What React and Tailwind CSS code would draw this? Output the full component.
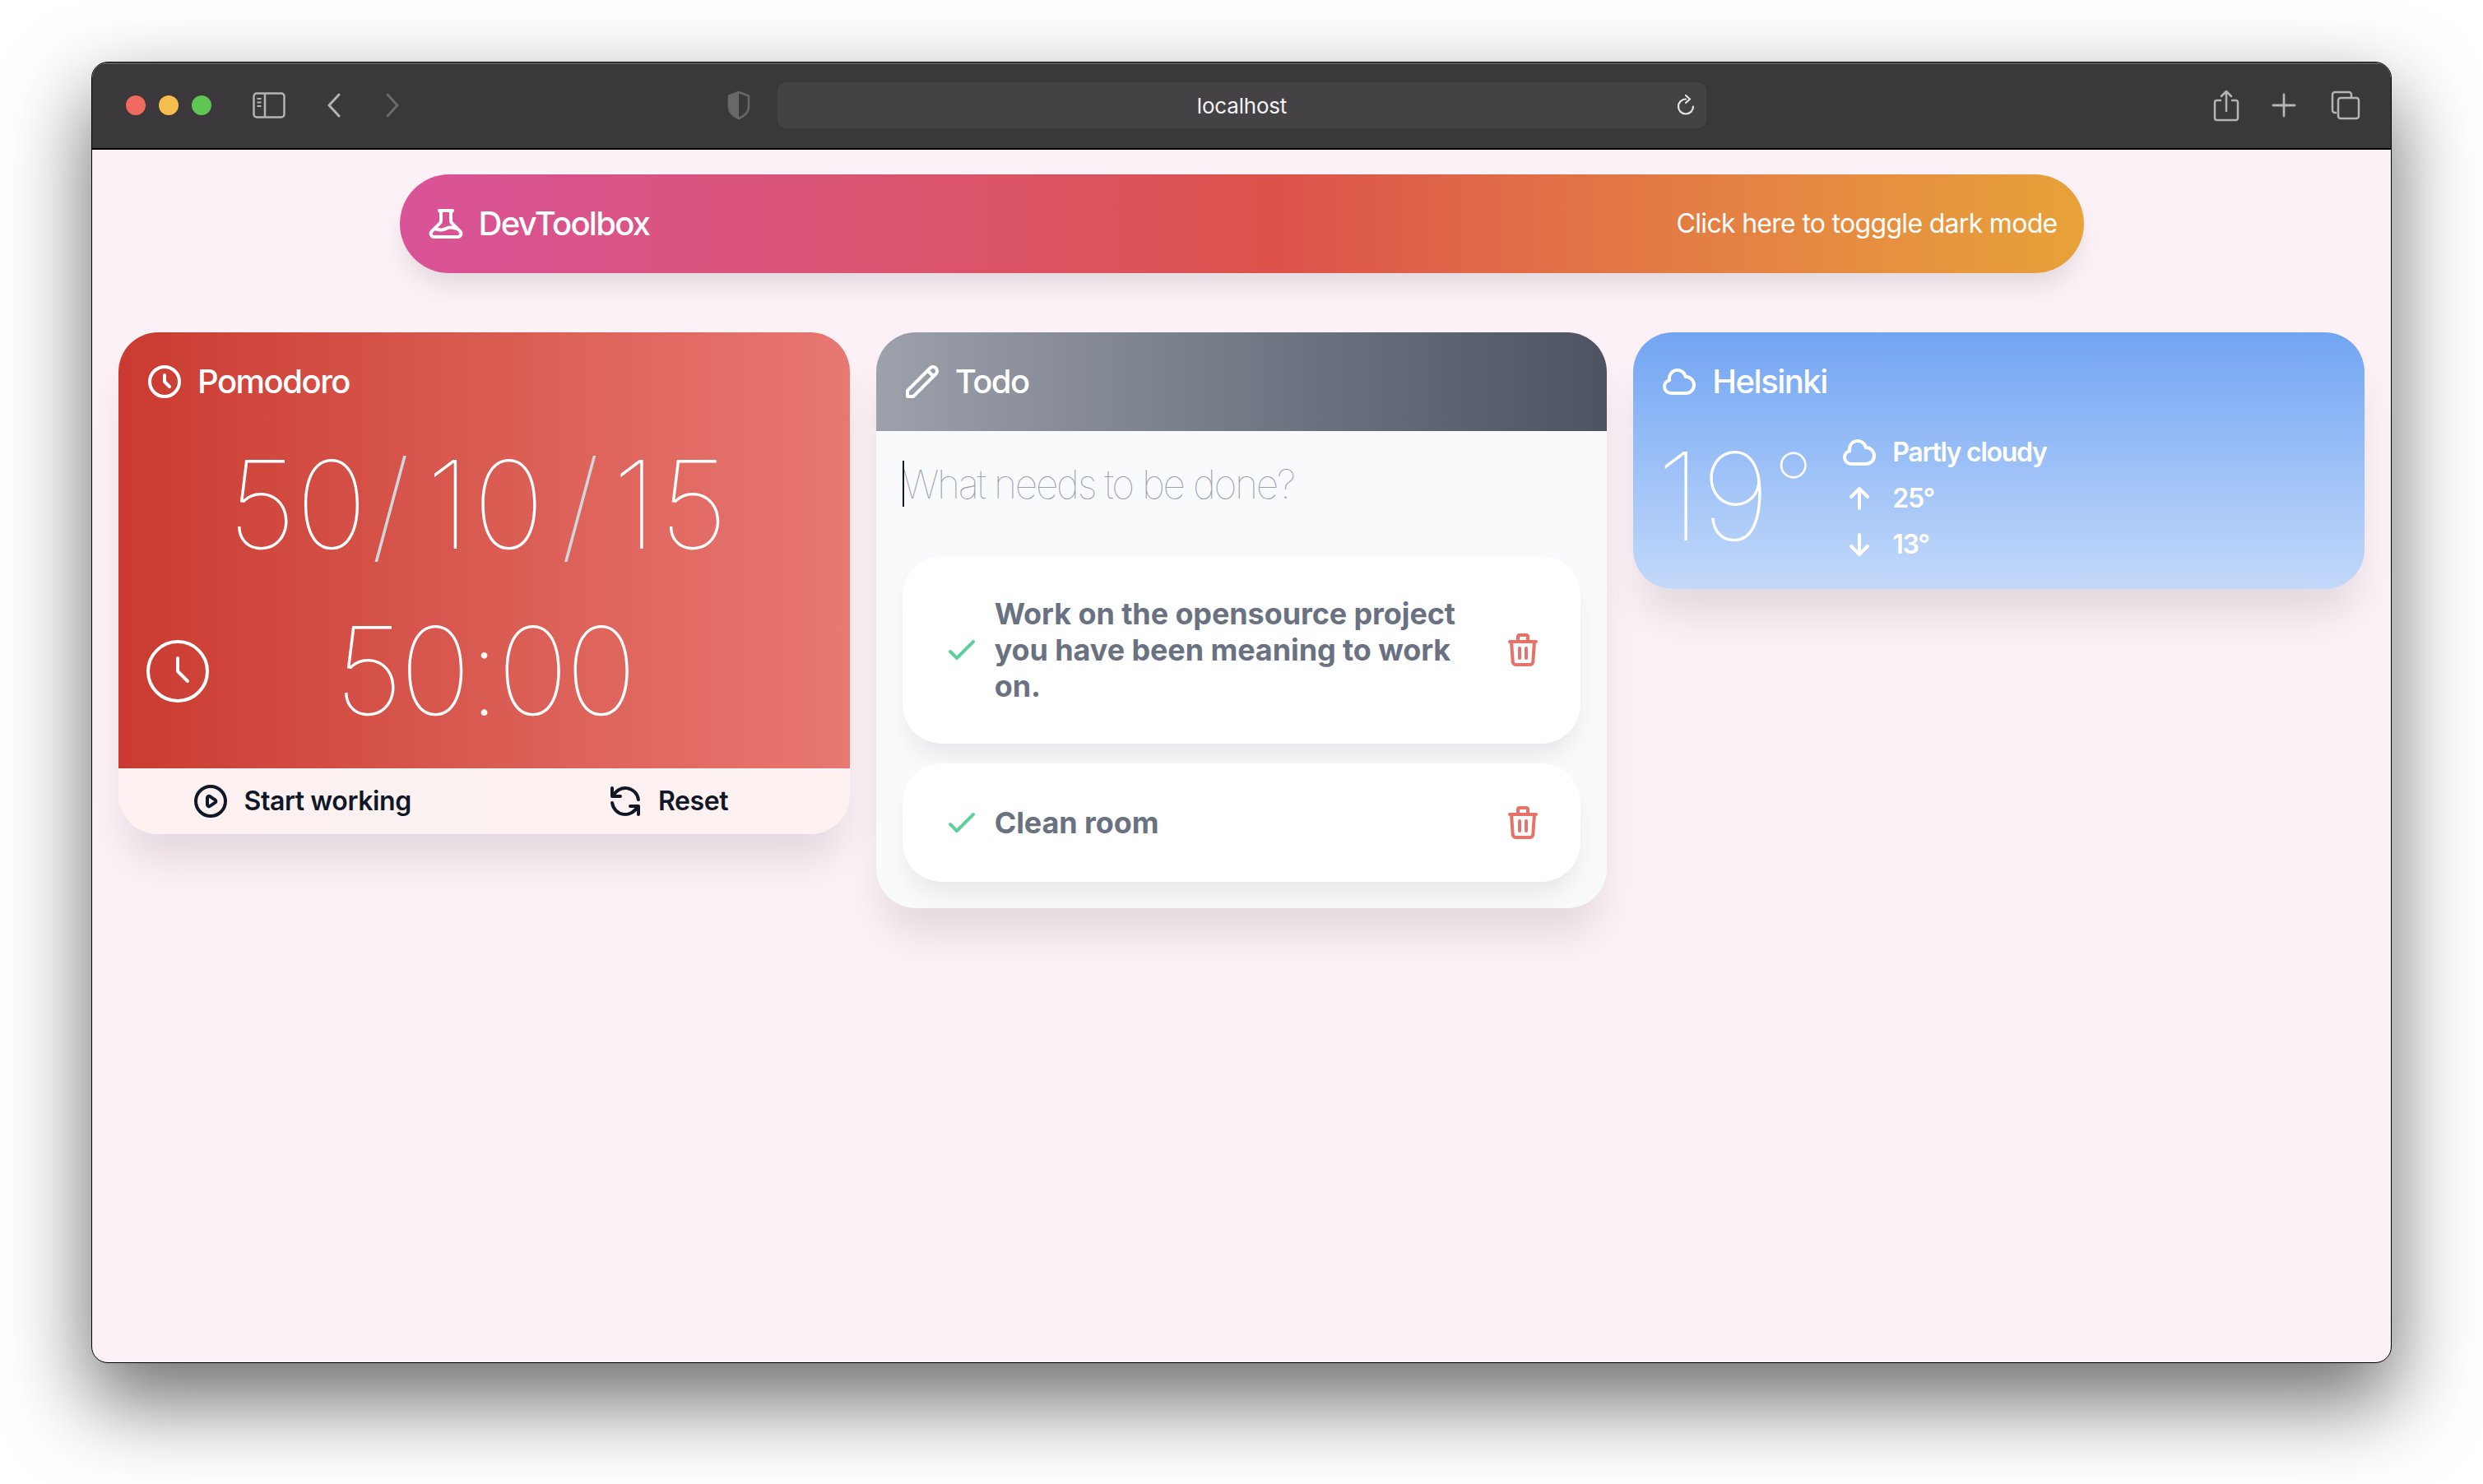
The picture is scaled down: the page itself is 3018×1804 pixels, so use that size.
import {
  HiOutlineBeaker,
  HiOutlineClock,
  HiOutlinePencil,
  HiOutlineCloud,
  HiOutlinePlay,
  HiOutlineRefresh,
  HiOutlineTrash,
  HiOutlineCheck,
  HiOutlineArrowSmUp,
  HiOutlineArrowSmDown,
} from 'react-icons/hi'

const todos = [
  { id: 1, title: 'Work on the opensource project you have been meaning to work on.' },
  { id: 2, title: 'Clean room' },
]

const weatherRows = [
  { icon: HiOutlineCloud, label: 'Partly cloudy' },
  { icon: HiOutlineArrowSmUp, label: '25°' },
  { icon: HiOutlineArrowSmDown, label: '13°' },
]

const ToolbarBar = () => (
  <div className="flex items-center h-[106px] bg-[#3a383b] border-b-2 border-black shadow-[inset_0_2px_0_#5c5a5d] shrink-0 text-[#b4b3b5]">
    <div className="flex gap-4 ml-[41px]">
      <span className="w-6 h-6 rounded-full bg-[#ee695e]" />
      <span className="w-6 h-6 rounded-full bg-[#f5be4f]" />
      <span className="w-6 h-6 rounded-full bg-[#60c553]" />
    </div>
    <svg className="ml-[50px]" width="40" height="32" viewBox="0 0 40 32" fill="none" stroke="currentColor" strokeWidth="2.5">
      <rect x="1.5" y="1.5" width="37" height="29" rx="3.5" />
      <path d="M15 1.5v29" />
      <path d="M5.5 8h5M5.5 12.500h5M5.500 17h5" strokeWidth="2" />
    </svg>
    <svg className="ml-[49px]" width="20" height="30" viewBox="0 0 20 30" fill="none" stroke="currentColor" strokeWidth="3" strokeLinecap="round" strokeLinejoin="round">
      <path d="M16 2 4 15l12 13" />
    </svg>
    <svg className="ml-[51px] text-[#6b6a6c]" width="20" height="30" viewBox="0 0 20 30" fill="none" stroke="currentColor" strokeWidth="3" strokeLinecap="round" strokeLinejoin="round">
      <path d="M4 2l12 13L4 28" />
    </svg>
    <svg className="ml-[396px] text-[#68676a]" width="30" height="36" viewBox="0 0 30 36" fill="none">
      <path d="M15 2 3 6.500V20c0 6 5 11 12 14 7-3 12-8 12-14V6.500Z" stroke="currentColor" strokeWidth="2.500" strokeLinejoin="round" />
      <path d="M15 2 3 6.500V20c0 6 5 11 12 14Z" fill="currentColor" />
    </svg>
    <div className="relative flex items-center justify-center ml-[32px] w-[1129px] h-14 rounded-[10px] bg-[#444245] text-[26px] tracking-[-0.2px] text-[#f2f2f2]">
      localhost
      <svg className="absolute right-[12px] top-[14px]" width="24" height="30" viewBox="0 0 24 30" fill="none" stroke="#e6e6e6" strokeWidth="2.200" strokeLinecap="round" strokeLinejoin="round">
        <path d="M11 6.500a9 9 0 1 0 9 9" />
        <path d="M11 2l5 4.500-5 4.500" />
      </svg>
    </div>
    <svg className="ml-[615px]" width="34" height="40" viewBox="0 0 34 40" fill="none" stroke="currentColor" strokeWidth="2.500" strokeLinecap="round" strokeLinejoin="round">
      <path d="M10 14H5.500A2.500 2.500 0 0 0 3 16.500v19A2.500 2.500 0 0 0 5.500 38h23a2.500 2.500 0 0 0 2.500-2.500v-19a2.500 2.500 0 0 0-2.500-2.500H24" />
      <path d="M17 27V3M11 9l6-6 6 6" />
    </svg>
    <svg className="ml-[38px]" width="30" height="30" viewBox="0 0 30 30" fill="none" stroke="currentColor" strokeWidth="2.800" strokeLinecap="round">
      <path d="M15 2v26M2 15h26" />
    </svg>
    <svg className="ml-[42px]" width="36" height="36" viewBox="0 0 36 36" fill="none" stroke="currentColor" strokeWidth="2.500" strokeLinejoin="round">
      <path d="M7 27H5a3 3 0 0 1-3-3V5a3 3 0 0 1 3-3h17a3 3 0 0 1 3 3v3" />
      <rect x="9" y="9" width="25" height="25" rx="3" />
    </svg>
  </div>
)

const CardTitle = ({ icon: Icon, title }) => (
  <div className="flex items-center gap-[16px] h-[120px] px-[32px] text-white text-[40px] font-medium tracking-[-1.5px] shrink-0">
    <Icon className="w-12 h-12" />
    <span>{title}</span>
  </div>
)

const Pomodoro = () => (
  <div className="rounded-[48px] overflow-hidden shadow-[0_40px_50px_-10px_rgba(0,0,0,0.1)]">
    <div className="h-[530px] bg-gradient-to-r from-[#ca3a30] to-[#e87872] text-white">
      <CardTitle icon={HiOutlineClock} title="Pomodoro" />
      <div className="flex justify-center text-[148px] font-thin tracking-[-1px] leading-[160px] mt-[10px] pr-[12px]">
        <span>50</span>
        <span className="ml-[5px] mr-[20px] text-gray-300">/</span>
        <span className="tracking-[3px]">10</span>
        <span className="ml-[16px] mr-[16px] text-gray-300">/</span>
        <span className="tracking-[3px]">15</span>
      </div>
      <div className="grid grid-cols-[1fr_auto_1fr] items-center mt-[42px] px-[24px]">
        <svg className="w-24 h-24" viewBox="0 0 24 24" fill="none" stroke="currentColor" strokeWidth="1" strokeLinecap="round" strokeLinejoin="round">
          <path d="M12 8v4l3 3m6-3a9 9 0 11-18 0 9 9 0 0118 0z" />
        </svg>
        <span className="text-[148px] font-thin tracking-[-4.5px] leading-[160px]">50:00</span>
        <span />
      </div>
    </div>
    <div className="grid grid-cols-2 h-[80px] text-gray-900 text-[32px] font-semibold tracking-[-0.4px]">
      <div className="flex items-center justify-center gap-[16px] bg-gradient-to-r from-[#fdf2f1] to-[#fbf1f0]">
        <HiOutlinePlay className="w-12 h-12" />
        <span>Start working</span>
      </div>
      <div className="flex items-center justify-center gap-[16px] bg-[#fdf2f1]">
        <HiOutlineRefresh className="w-12 h-12" />
        <span>Reset</span>
      </div>
    </div>
  </div>
)

const TodoItem = ({ title }) => (
  <div className="flex items-center gap-[16px] pl-[48px] pr-[46px] py-[48px] rounded-[48px] bg-white shadow-[0_20px_30px_-6px_rgba(0,0,0,0.08)]">
    <HiOutlineCheck className="w-12 h-12 text-[#5fd09c] shrink-0" />
    <p className="flex-1 text-[36px] leading-[44px] font-bold tracking-[-0.1px] text-gray-500">{title}</p>
    <HiOutlineTrash className="w-12 h-12 text-[#e57369] shrink-0" />
  </div>
)

const Todo = () => (
  <div className="rounded-[48px] overflow-hidden bg-[#f9fafb] shadow-[0_40px_50px_-10px_rgba(0,0,0,0.1)]">
    <div className="bg-gradient-to-r from-[#9ca1ac] to-[#4d5361]">
      <CardTitle icon={HiOutlinePencil} title="Todo" />
    </div>
    <div className="p-[32px]">
      <div className="relative h-[56px] mt-[4px]">
        <span className="absolute left-0 top-0 w-[2px] h-[56px] bg-gray-900" />
        <input
          readOnly
          placeholder="What needs to be done?"
          className="w-full h-full bg-transparent outline-none text-[48px] font-thin tracking-[-2.3px] placeholder:text-gray-400"
        />
      </div>
      <div className="flex flex-col gap-[24px] mt-[60px]">
        {todos.map((todo) => (
          <TodoItem key={todo.id} title={todo.title} />
        ))}
      </div>
    </div>
  </div>
)

const Weather = () => (
  <div className="h-[312px] rounded-[48px] bg-gradient-to-b from-[#72a5f2] to-[#c3d9fa] text-white shadow-[0_40px_50px_-10px_rgba(0,0,0,0.1)]">
    <CardTitle icon={HiOutlineCloud} title="Helsinki" />
    <div className="flex items-start px-[32px]">
      <span className="text-[148px] font-thin leading-[160px] -ml-[4px]">19</span>
      <span className="text-[108px] font-thin leading-[120px] mt-[6px] ml-[4px]">°</span>
      <div className="flex flex-col ml-[32px] -mt-[2px] text-[32px] font-semibold tracking-[-1.3px]">
        {weatherRows.map(({ icon: Icon, label }) => (
          <div key={label} className="flex items-center gap-[16px] h-[56px]">
            <Icon className="w-12 h-12" />
            <span>{label}</span>
          </div>
        ))}
      </div>
    </div>
  </div>
)

const App = () => (
  <div className="w-[3018px] h-[1804px] pt-[75px] pl-[111px] bg-white overflow-hidden font-['Inter',sans-serif]">
    <div className="flex flex-col w-[2796px] h-[1582px] rounded-[20px] overflow-hidden border border-black bg-[#fbf1f7] shadow-[0_44px_100px_4px_rgba(0,0,0,0.56)]">
      <ToolbarBar />
      <main>
        <div className="flex items-center justify-between w-[2047px] h-[120px] mx-auto mt-[30px] px-[32px] rounded-full bg-gradient-to-r from-[#d95398] via-[#dc524a] via-[52%] to-[#e8a239] text-white shadow-[0_20px_30px_-6px_rgba(0,0,0,0.1)]">
          <div className="flex items-center gap-[16px] text-[40px] font-medium tracking-[-1.7px]">
            <HiOutlineBeaker className="w-12 h-12" />
            <span>DevToolbox</span>
          </div>
          <span className="text-[32px] tracking-[-0.7px]">Click here to togggle dark mode</span>
        </div>
        <div className="grid grid-cols-3 items-start gap-[32px] px-[32px] mt-[72px]">
          <Pomodoro />
          <Todo />
          <Weather />
        </div>
      </main>
    </div>
  </div>
)

export default App
